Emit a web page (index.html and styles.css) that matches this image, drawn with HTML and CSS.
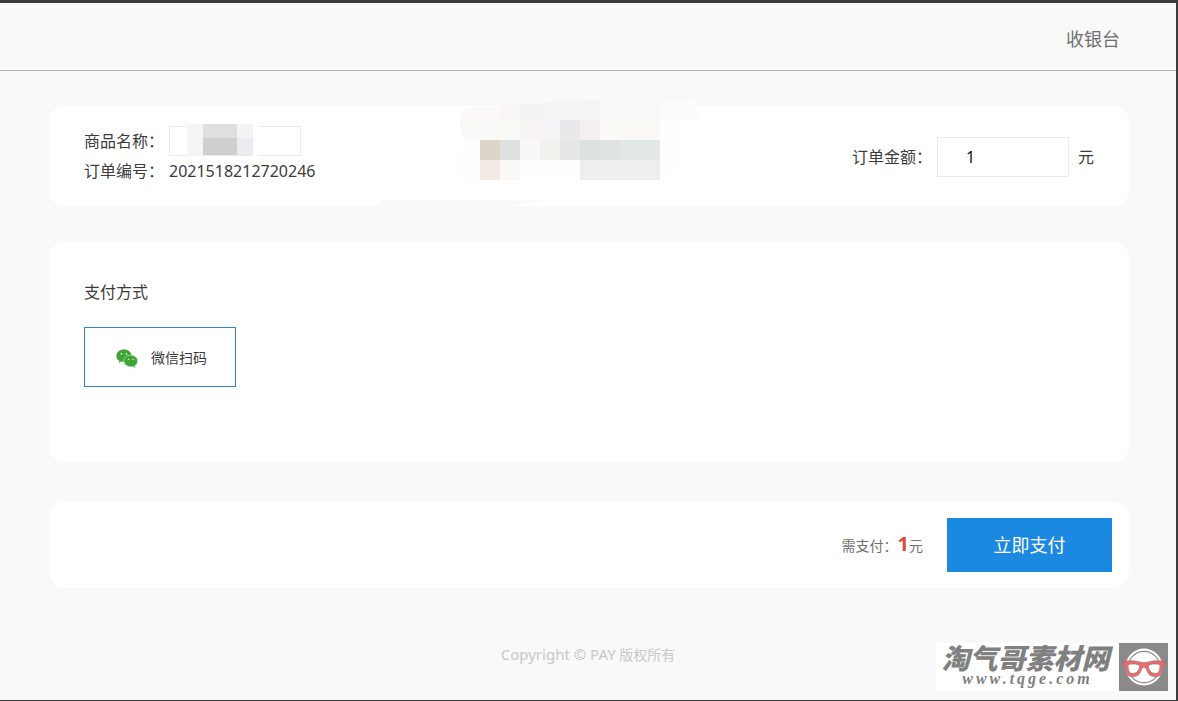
FILE: index.html
```html
<!DOCTYPE html>
<html lang="zh-CN">
<head>
<meta charset="utf-8">
<meta name="viewport" content="width=device-width, initial-scale=1">
<title>收银台</title>
<link rel="stylesheet" href="styles.css">
</head>
<body>
<div class="page">
  <header class="header"><h1 class="header-title">收银台</h1></header>
  <main class="main">
    <section class="card order">
      <div class="order-info">
        <div class="row">
          <label for="product">商品名称：</label>
          <div class="masked">
            <input class="field field-name" id="product" type="text">
            <svg class="mask-name" viewBox="0 0 88 32" shape-rendering="crispEdges" aria-hidden="true">
              <path fill="#fff" d="M66 0h5v32h-5z"/><path fill="#f5f4f6" d="M0 0h16v32H0z"/>
              <path fill="#dfdfdf" d="M16 0h34v14H16z"/><path fill="#d0cfd0" d="M16 14h34v17H16z"/>
              <path fill="#f3f3f5" d="M50 0h16v14H50z"/><path fill="#ebebf1" d="M50 14h16v17H50z"/>
            </svg>
          </div>
        </div>
        <div class="row"><span>订单编号：</span><span>2021518212720246</span></div>
      </div>
      <div class="row amount">
        <label for="amount">订单金额：</label>
        <input class="field field-amount" id="amount" type="text" value="1">
        <span class="unit">元</span>
      </div>
      <svg class="mosaic" viewBox="0 0 340 120" aria-hidden="true">
        <path fill="#fafafa" d="M0 105H175Q145 109 115 112Q70 119 30 118Q2 118 0 108z"/>
        <path fill="#faf8f8" d="M80 25Q80 12 94 12H120Q130 7 160 8Q185 4 200 5H280V45H85Q80 40 80 25z"/>
        <path fill="#fcfcfc" d="M280 5H312Q320 8 321 25H280z"/>
        <path fill="#fefefe" d="M280 25H300V70Q297 84 280 85z"/>
        <path fill="#fdfdfd" d="M88 45h12v40H80V55h8z"/>
        <path fill="#f7f5f6" d="M120 10h20v15h-20z"/><path fill="#f3f3f3" d="M140 9h20v16h-20z"/>
        <path fill="#f5f4f5" d="M160 8Q180 5 200 5h20v20h-60z"/>
        <path fill="#f9f9f7" d="M81 25h59v20H86Q81 38 81 25z"/><path fill="#f7f3f2" d="M140 25h20v20h-20z"/>
        <path fill="#f4f3f6" d="M160 25h20v20h-20z"/><path fill="#e9e9eb" d="M180 25h20v20h-20z"/>
        <path fill="#f4eff1" d="M200 25h20v20h-20z"/><path fill="#faf9f7" d="M220 25h60v20h-60z"/>
        <path fill="#ddd4ca" d="M100 45h20v20h-20z"/><path fill="#dfe0e0" d="M120 45h20v20h-20z"/>
        <path fill="#f9f8f6" d="M140 45h20v20h-20z"/><path fill="#f1f0ec" d="M160 45h20v20h-20z"/>
        <path fill="#e6e6e6" d="M180 45h20v20h-20z"/><path fill="#dce1e2" d="M200 45h20v20h-20z"/>
        <path fill="#dfe3e4" d="M220 45h20v20h-20z"/><path fill="#e2e7e8" d="M240 45h40v20h-40z"/>
        <path fill="#f4ebe6" d="M100 65h20v20h-20z"/><path fill="#faf9f8" d="M120 65h20v20h-20z"/>
        <path fill="#fefefc" d="M140 65h60v20h-60z"/><path fill="#eeeeef" d="M200 65h80v20h-80z"/>
      </svg>
    </section>

    <section class="card methods">
      <h2 class="methods-title">支付方式</h2>
      <button class="method" type="button">
        <svg class="wechat" viewBox="0 0 22 19" aria-hidden="true">
          <path fill="#3fa535" d="M8 .6C3.700.6.400 3.300.400 6.900c0 2 1.100 3.700 2.900 4.900L2.600 14l2.700-1.400c.9.3 1.800.4 2.700.4 4.200 0 7.600-2.700 7.600-6.200S12.200.6 8 .6z"/>
          <path fill="#3fa535" stroke="#d5eed1" stroke-width=".6" d="M14.700 6.200c-3.900 0-6.800 2.500-6.800 5.700s2.900 5.800 6.800 5.800c.8 0 1.500-.1 2.200-.3l2.600 1.300-.6-2.100c1.700-1 2.700-2.700 2.700-4.700 0-3.200-3-5.700-6.900-5.700z"/>
          <g fill="#d5eed1"><circle cx="5.400" cy="4.900" r=".9"/><circle cx="10.500" cy="4.900" r=".9"/><circle cx="12.500" cy="10.300" r=".8"/><circle cx="17" cy="10.300" r=".8"/></g>
        </svg>
        <span>微信扫码</span>
      </button>
    </section>

    <section class="card checkout">
      <p class="due">需支付：<strong class="due-value">1</strong>元</p>
      <button class="pay" type="button">立即支付</button>
    </section>
  </main>
  <footer class="footer"><span class="footer-latin">Copyright © PAY</span> 版权所有</footer>
  <div class="brand">
    <div class="brand-text"><span class="brand-name">淘气哥素材网</span><span class="brand-url">www.tqge.com</span></div>
    <svg class="brand-logo" viewBox="0 0 49 48" aria-hidden="true">
      <path fill="#8c898a" d="M0 0h49v48H0z"/>
      <circle cx="25" cy="24" r="18.500" fill="#fff"/>
      <circle cx="25" cy="24" r="15.700" fill="#fff" stroke="#8c898a" stroke-width="1.200"/>
      <path fill="#f06a6b" stroke="#8c7475" stroke-width=".6" d="M4 18.500c6-1.300 13-1 18 .8q3 .8 6 0c5-1.800 12-2.100 18-.8v3.200l-2.400 2c-.3 6-2 9.300-5.600 9.800-6 .8-9.400-2-10.700-8q-2.300-2-4.600 0c-1.300 6-4.700 8.800-10.700 8-3.600-.5-5.300-3.800-5.600-9.800L4 21.700z"/>
      <path fill="#fff" stroke="#8c7475" stroke-width=".7" d="M9 21.500c4-1 8.500-.7 11.500.6.200 5-2.500 8.700-7.500 8.500-3-.2-4-3.900-4-9.100zM41 21.500c-4-1-8.500-.7-11.500.6-.2 5 2.500 8.700 7.500 8.500 3-.2 4-3.900 4-9.100z"/>
    </svg>
  </div>
</div>
</body>
</html>
```
FILE: styles.css
```css
* { box-sizing: border-box; }

body {
  margin: 0;
  background: #f9f9f9;
  color: #3c3c3c;
  font: 16px/30px "Noto Sans", "Noto Sans CJK SC", sans-serif;
}

h1, h2, p { margin: 0; font-weight: 400; }

button, input { font-family: inherit; color: inherit; }

.page {
  position: relative;
  min-height: 100vh;
  border: solid #3c3c3e;
  border-width: 3px 2px 1px 0;
}

.header {
  display: flex;
  align-items: center;
  justify-content: flex-end;
  height: 68px;
  padding: 4px 56px 0 0;
  border-bottom: 1px solid #a3b6c9;
}

.header-title { font-size: 18px; color: #707070; }

.main { padding: 35px 47px 0 49px; }

.card {
  position: relative;
  border-radius: 16px;
  background: #fff;
}

.order {
  display: flex;
  align-items: center;
  justify-content: space-between;
  padding: 20px 35px;
}

.row { display: flex; align-items: center; gap: 5px; }

.amount { padding-top: 2px; }

.field {
  display: block;
  width: 132px;
  border: 1px solid #ebebeb;
  background: #fff;
}

.field-name { height: 30px; padding: 0 8px; }

.field-amount {
  height: 40px;
  padding: 0 28px;
  font-size: 16px;
  color: #111;
}

.unit { margin-left: 4px; }

.masked { position: relative; }

.mask-name {
  position: absolute;
  top: -2px;
  left: 18px;
  width: 88px;
  height: 32px;
}

.mosaic {
  position: absolute;
  top: -11px;
  left: 331px;
  width: 340px;
  height: 120px;
}

.methods {
  min-height: 220px;
  margin-top: 36px;
  padding: 35px;
}

.methods-title { margin-bottom: 20px; font-size: 16px; }

.method {
  display: flex;
  align-items: center;
  justify-content: center;
  gap: 13px;
  width: 152px;
  height: 60px;
  padding: 0 0 0 3px;
  border: 1px solid #2f86c6;
  background: #fff;
  font-size: 14px;
}

.wechat { width: 22px; height: 19px; margin-top: 3px; }

.checkout {
  display: flex;
  align-items: center;
  justify-content: flex-end;
  gap: 24px;
  margin-top: 40px;
  padding: 16px 17px;
}

.due { font-size: 14px; color: #707070; }

.due-value { font-size: 20px; color: #e04a35; }

.pay {
  width: 165px;
  height: 54px;
  padding: 0 0 2px;
  border: 0;
  background: #1b89e0;
  color: #fff;
  font-size: 18px;
}

.footer {
  padding: 51px 0 20px;
  text-align: center;
  font-size: 14px;
  color: #c8c8c8;
}

.footer-latin { font-size: 15px; }

.brand {
  position: absolute;
  right: 8px;
  bottom: 9px;
  display: flex;
  color: #808080;
}

.brand-text {
  display: flex;
  flex-direction: column;
  align-items: center;
  width: 183px;
  background: #fff;
}

.brand-name {
  padding-right: 4px;
  font: italic 900 28px/28px "Noto Sans CJK SC", sans-serif;
}

.brand-url {
  font: italic bold 16px/16px "Liberation Serif", serif;
  letter-spacing: 3px;
}

.brand-logo { width: 49px; height: 48px; }
```
